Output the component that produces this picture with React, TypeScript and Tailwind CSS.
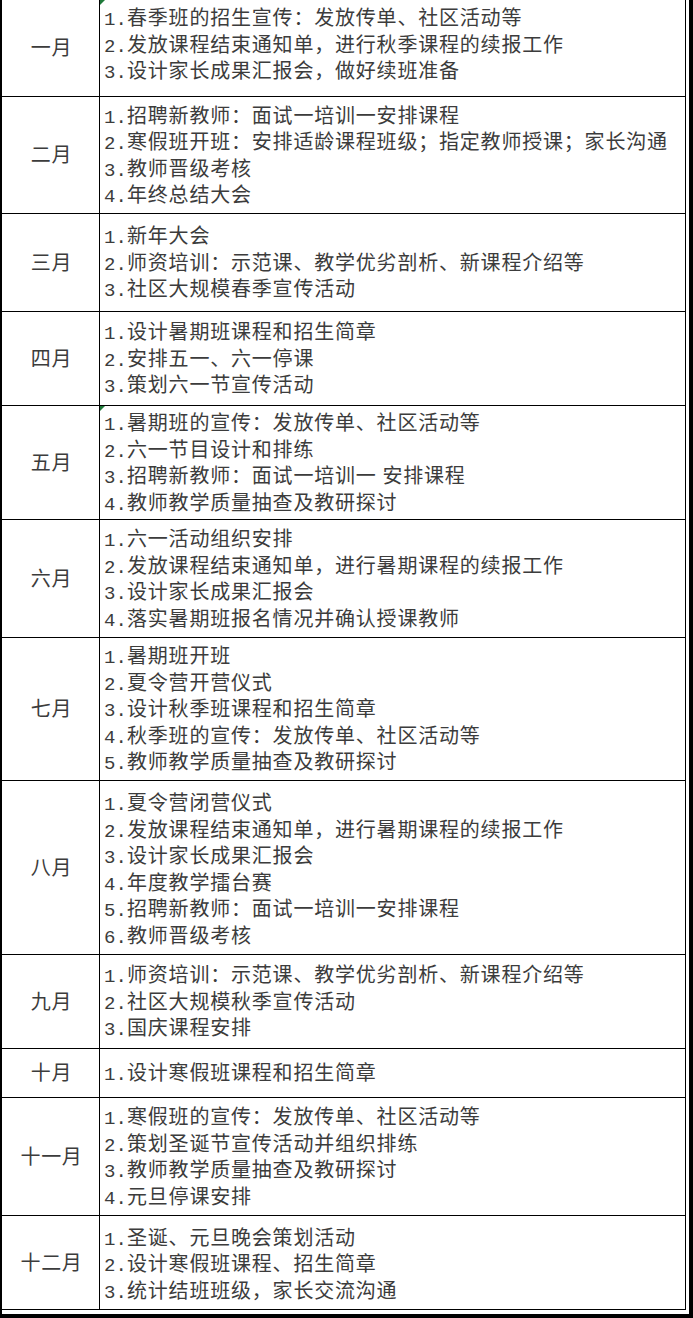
const rows: { month: string; h: string; items: string[]; mark?: boolean; shift?: string }[] = [
  {
    month: "一月",
    h: "h-[97px]",
    mark: true,
    shift: "pb-[6px]",
    items: ["春季班的招生宣传：发放传单、社区活动等", "发放课程结束通知单，进行秋季课程的续报工作", "设计家长成果汇报会，做好续班准备"],
  },
  {
    month: "二月",
    h: "h-[117px]",
    items: ["招聘新教师：面试一培训一安排课程", "寒假班开班：安排适龄课程班级；指定教师授课；家长沟通", "教师晋级考核", "年终总结大会"],
  },
  {
    month: "三月",
    h: "h-[98px]",
    items: ["新年大会", "师资培训：示范课、教学优劣剖析、新课程介绍等", "社区大规模春季宣传活动"],
  },
  {
    month: "四月",
    h: "h-[94px]",
    items: ["设计暑期班课程和招生简章", "安排五一、六一停课", "策划六一节宣传活动"],
  },
  {
    month: "五月",
    h: "h-[114px]",
    mark: true,
    items: ["暑期班的宣传：发放传单、社区活动等", "六一节目设计和排练", "招聘新教师：面试一培训一 安排课程", "教师教学质量抽查及教研探讨"],
  },
  {
    month: "六月",
    h: "h-[118px]",
    items: ["六一活动组织安排", "发放课程结束通知单，进行暑期课程的续报工作", "设计家长成果汇报会", "落实暑期班报名情况并确认授课教师"],
  },
  {
    month: "七月",
    h: "h-[143px]",
    items: ["暑期班开班", "夏令营开营仪式", "设计秋季班课程和招生简章", "秋季班的宣传：发放传单、社区活动等", "教师教学质量抽查及教研探讨"],
  },
  {
    month: "八月",
    h: "h-[174px]",
    shift: "pt-[4px]",
    items: [
      "夏令营闭营仪式",
      "发放课程结束通知单，进行暑期课程的续报工作",
      "设计家长成果汇报会",
      "年度教学擂台赛",
      "招聘新教师：面试一培训一安排课程",
      "教师晋级考核",
    ],
  },
  {
    month: "九月",
    h: "h-[94px]",
    items: ["师资培训：示范课、教学优劣剖析、新课程介绍等", "社区大规模秋季宣传活动", "国庆课程安排"],
  },
  {
    month: "十月",
    h: "h-[49px]",
    items: ["设计寒假班课程和招生简章"],
  },
  {
    month: "十一月",
    h: "h-[118px]",
    items: ["寒假班的宣传：发放传单、社区活动等", "策划圣诞节宣传活动并组织排练", "教师教学质量抽查及教研探讨", "元旦停课安排"],
  },
  {
    month: "十二月",
    h: "h-[94px]",
    shift: "pt-[4px]",
    items: ["圣诞、元旦晚会策划活动", "设计寒假班课程、招生简章", "统计结班班级，家长交流沟通"],
  },
]

export default function App() {
  return (
    <div className="w-[693px] h-[1318px] bg-white border-l-[2px] border-r-[4px] border-b-[4px] border-black pr-[3px] pb-[4px] overflow-hidden font-['Liberation_Serif','Noto_Sans_CJK_SC',serif] text-[#3c3c3c]">
      <div className="w-[684px] border-r border-black">
        {rows.map((row) => (
          <div key={row.month} className={`flex border-b border-black ${row.h}`}>
            <div className="w-[98px] shrink-0 border-r border-black flex items-center justify-center text-[20px] tracking-[0.7px] pl-[2px]">
              {row.month}
            </div>
            <div className={`relative flex-1 flex flex-col justify-center pl-[4px] whitespace-nowrap ${row.shift ?? "pt-[1px]"}`}>
              {row.mark && (
                <svg className="absolute left-0 top-0" width="5" height="5" viewBox="0 0 5 5">
                  <polygon points="0,0 5,0 0,5" fill="#1f7a3a" />
                </svg>
              )}
              {row.items.map((item, i) => (
                <div key={i} className="flex items-baseline h-[26.5px] shrink-0">
                  <span className="font-['Liberation_Mono',monospace] text-[19px] leading-[26.5px] w-[23px] shrink-0">
                    {i + 1}.
                  </span>
                  <span className="text-[20px] leading-[26.5px] tracking-[0.8px]">{item}</span>
                </div>
              ))}
            </div>
          </div>
        ))}
      </div>
    </div>
  )
}
